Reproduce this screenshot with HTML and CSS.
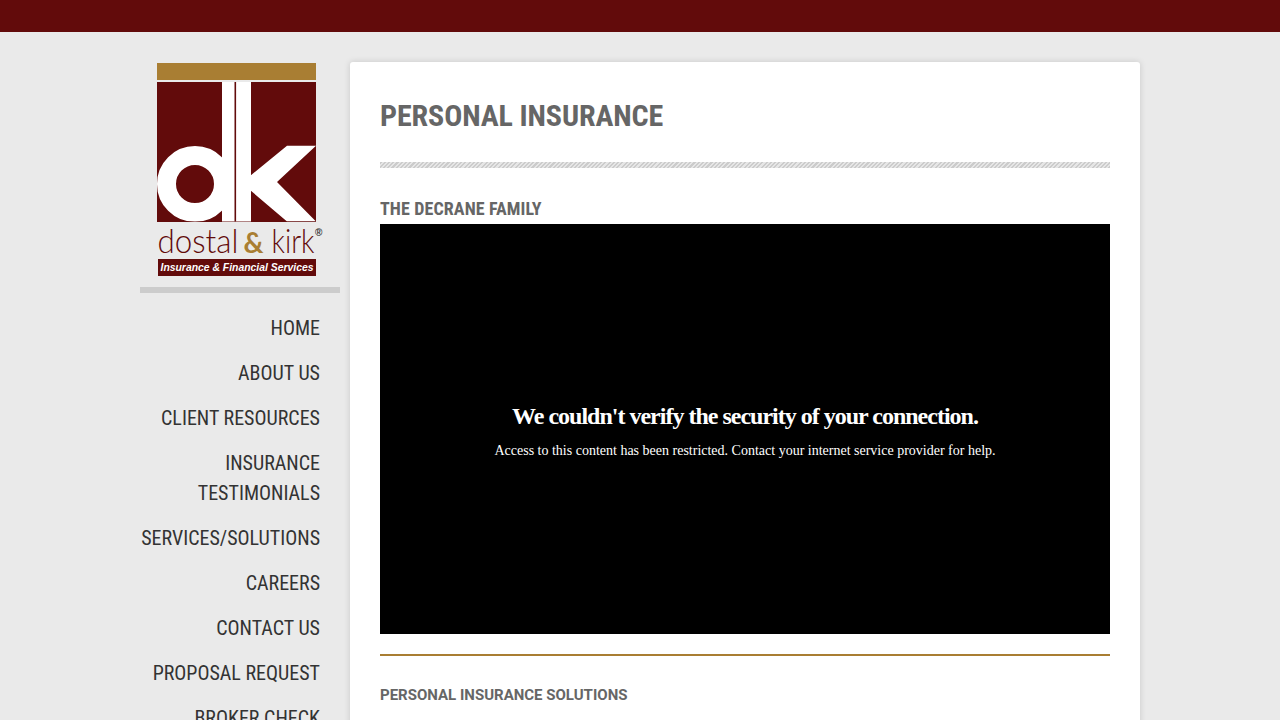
FILE: index.html
```html
<!DOCTYPE html>
<html>
<head>
<meta charset="utf-8"/>
<title>Personal Insurance</title>
<link rel="stylesheet" href="styles.css">
</head>
<body>

<div class="topbar"></div>

<div class="wrap">

<div class="side">
<svg class="logo" viewBox="155 60 170 220" width="170" height="220" xmlns="http://www.w3.org/2000/svg">
<rect x="157" y="63" width="159" height="17" fill="#a97e33"/>
<rect x="157" y="82" width="159" height="140" fill="#620b0b"/>
<clipPath id="markclip"><rect x="157" y="82" width="159" height="139.5"/></clipPath>
<g clip-path="url(#markclip)">
<circle cx="195" cy="184" r="28.5" fill="none" stroke="#fff" stroke-width="19"/>
<rect x="222" y="82" width="29" height="140" fill="#fff"/>
<rect x="234.5" y="82" width="1.6" height="140" fill="#620b0b"/>
<polygon points="250,176 287,145.7 316,145.7 277,182 316,221.5 287,221.5 250,190" fill="#fff"/>
</g>
<text class="logo-name" x="157.500" y="253" textLength="81" lengthAdjust="spacingAndGlyphs">dostal</text>
<text class="logo-amp" x="243.500" y="253" textLength="20" lengthAdjust="spacingAndGlyphs">&amp;</text>
<text class="logo-name" x="271.500" y="253" textLength="43" lengthAdjust="spacingAndGlyphs">kirk</text>
<text class="logo-reg" x="315" y="236">®</text>
<rect x="158" y="259" width="158" height="17" fill="#620b0b"/>
<text class="logo-sub" x="160.500" y="270.500" textLength="153" lengthAdjust="spacingAndGlyphs">Insurance &amp; Financial Services</text>
</svg>

<ul class="nav">
<li><a>HOME</a></li>
<li><a>ABOUT US</a></li>
<li><a>CLIENT RESOURCES</a></li>
<li><a>INSURANCE TESTIMONIALS</a></li>
<li><a>SERVICES/SOLUTIONS</a></li>
<li><a>CAREERS</a></li>
<li><a>CONTACT US</a></li>
<li><a>PROPOSAL REQUEST</a></li>
<li><a>BROKER CHECK</a></li>
</ul>
</div>

<div class="main">
<h1 class="title">PERSONAL INSURANCE</h1>
<div class="hatch"></div>
<h3 class="subtitle">THE DECRANE FAMILY</h3>
<div class="video">
<p class="video-head">We couldn't verify the security of your connection.</p>
<p class="video-text">Access to this content has been restricted. Contact your internet service provider for help.</p>
</div>
<div class="goldline"></div>
<h4 class="section">PERSONAL INSURANCE SOLUTIONS</h4>
</div>

</div>

</body>
</html>
```
FILE: styles.css
```css
html,body{margin:0;padding:0}
body{background:#eaeaea;font-family:Roboto,"Liberation Sans",sans-serif;color:#666}
ul{margin:0;padding:0;list-style:none}

.topbar{height:32px;background:#620b0b}

.wrap{width:1000px;margin:30px auto 0;display:flex;gap:10px;align-items:flex-start}

/** side **/
.side{width:200px;flex:none}
.logo{display:block;margin:-2px auto 0}
.logo-name{font:300 33px Lato,"Liberation Sans",sans-serif;fill:#620b0b}
.logo-amp{font:700 28px Lato,"Liberation Sans",sans-serif;fill:#a97e33}
.logo-reg{font:700 10px "Liberation Sans",sans-serif;fill:#333}
.logo-sub{font:italic 700 10px "Liberation Sans",sans-serif;fill:#fff}

.nav{border-top:6px solid #ccc;margin-top:7px;padding:20px 20px 20px 0;text-align:right}
.nav li{margin-bottom:15px}
.nav a{display:block;font-size:20px;line-height:30px;color:#333;font-stretch:75%}

/** main **/
.main{width:730px;height:1000px;padding:0 30px;background:#fff;border-radius:3px;box-shadow:0 0 6px rgba(0,0,0,.15)}
.title{margin:0;padding-top:35px;font-size:30px;line-height:37px;font-weight:700;color:#666;font-stretch:75%;letter-spacing:-.1px}
.hatch{height:6px;margin-top:28px;background:repeating-linear-gradient(135deg,#ccc 0,#ccc 1.500px,#e6e6e6 1.500px,#e6e6e6 3px)}
.subtitle{margin:28px 0 2px;font-size:18px;line-height:26px;font-weight:700;color:#666;font-stretch:75%;letter-spacing:.1px}
.video{height:410px;background:#000;color:#fff;font-family:"Liberation Serif",serif;display:flex;flex-direction:column;align-items:center;justify-content:center;text-align:center;padding-top:4px;box-sizing:border-box}
.video p{margin:0}
.video-head{font-size:24px;line-height:28px;font-weight:700;letter-spacing:-1px;margin-bottom:12px!important}
.video-text{font-size:14px;line-height:18px}
.goldline{height:2px;margin-top:20px;background:#a97e33}
.section{margin:29px 0 0;font-size:15px;line-height:20px;font-weight:700;color:#666}
```
